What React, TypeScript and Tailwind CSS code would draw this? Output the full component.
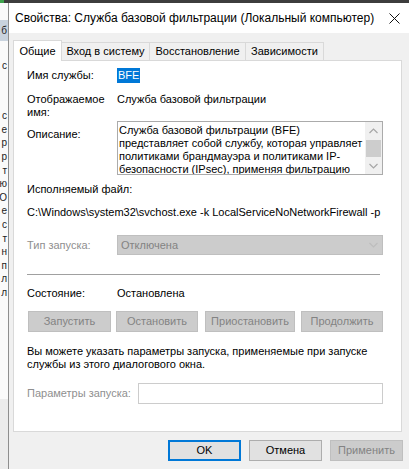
import React from 'react';

const font = "font-['Segoe_UI','Liberation_Sans',Arial,sans-serif]";

const stripLines = ['с', 'е', 'р', 'р', 'т', 'ю', 'О', 'е', 'с', 'т', 'н', 'п', 'л', 'л'];

const Chevron: React.FC<{ up?: boolean; color?: string }> = ({ up, color = '#a6a6a6' }) => (
  <svg width="9" height="6" viewBox="0 0 9 6" className="block">
    <polyline
      points={up ? '0.5,5 4.5,1 8.5,5' : '0.5,1 4.5,5 8.5,1'}
      fill="none"
      stroke={color}
      strokeWidth="1.2"
    />
  </svg>
);

const DisabledButton: React.FC<{ label: string; className?: string }> = ({ label, className }) => (
  <div
    className={`h-[21px] flex items-center justify-center bg-[#cccccc] border border-[#bfbfbf] text-[#838383] ${className}`}
  >
    {label}
  </div>
);

const App: React.FC = () => {
  return (
    <div className={`w-[409px] h-[469px] overflow-hidden flex flex-col bg-[#f0f0f0] text-[11px] leading-[13px] text-black ${font}`}>
      {/* edge of the window behind */}
      <div className="h-[3px] shrink-0 flex bg-[#3d3d3d]">
        <div className="w-[4px] bg-[#3fa34d]" />
      </div>

      <div className="flex flex-1 min-h-0">
        {/* strip of the background window */}
        <div className="w-[9px] shrink-0 flex flex-col border-r border-[#8e8e8e] bg-[#fafafa] overflow-hidden text-[10px]">
          <div className="h-[17px] shrink-0" />
          <div className="h-[21px] shrink-0 bg-[#c9d3de] flex items-center justify-end pr-px text-[#222]">б</div>
          <div className="h-[17px] shrink-0" />
          <div className="h-[14px] shrink-0 flex items-center justify-end pr-px text-[#222]">с</div>
          <div className="h-[37px] shrink-0" />
          {stripLines.map((t, i) => (
            <div key={i} className="h-[13.6px] shrink-0 flex items-center justify-end pr-px text-[#222]">
              {t}
            </div>
          ))}
          <div className="h-[100px] shrink-0" />
          <div className="flex-1 bg-[#ececec]" />
        </div>

        {/* dialog */}
        <div className="flex-1 flex flex-col min-w-0">
          {/* title bar */}
          <div className="h-[30px] shrink-0 bg-white flex items-center pl-[6px] pr-[9px]">
            <span className="text-[12px] leading-[15px] text-black whitespace-nowrap">
              Свойства: Служба базовой фильтрации (Локальный компьютер)
            </span>
            <div className="flex-1" />
            <svg width="11" height="11" viewBox="0 0 11 11">
              <path d="M0.5 0.5 L10.5 10.5 M10.5 0.5 L0.5 10.5" stroke="#111" strokeWidth="1" fill="none" />
            </svg>
          </div>

          {/* tabs */}
          <div className="mt-[7px] ml-[4px] h-[20px] flex items-end relative z-10">
            <div className="w-[49px] h-[21px] -mb-px bg-white border border-b-0 border-[#d9d9d9] flex items-center justify-center">
              Общие
            </div>
            <div className="w-[88px] h-[18px] border border-l-0 border-b-0 border-[#d9d9d9] flex items-center justify-center">
              Вход в систему
            </div>
            <div className="w-[96px] h-[18px] border border-l-0 border-b-0 border-[#d9d9d9] flex items-center justify-center">
              Восстановление
            </div>
            <div className="w-[78px] h-[18px] border border-l-0 border-b-0 border-[#d9d9d9] flex items-center justify-center">
              Зависимости
            </div>
          </div>

          {/* page */}
          <div className="ml-[4px] w-[389px] h-[372px] shrink-0 bg-white border border-[#d9d9d9] pl-[13px] pr-[18px] flex flex-col">
            <div className="mt-[7px] flex items-center h-[15px]">
              <div className="w-[90px]">Имя службы:</div>
              <span className="bg-[#0078d7] text-white leading-[15px] px-px">BFE</span>
            </div>

            <div className="mt-[10px] flex">
              <div className="w-[90px]">
                Отображаемое
                <br />
                имя:
              </div>
              <div>Служба базовой фильтрации</div>
            </div>

            <div className="mt-[2px] flex">
              <div className="w-[90px] pt-[7px]">Описание:</div>
              <div className="flex-1 h-[54px] border border-[#ababab] flex overflow-hidden">
                <div className="flex-1 pl-[1px] pt-[2px] overflow-hidden whitespace-nowrap">
                  Служба базовой фильтрации (BFE)
                  <br />
                  представляет собой службу, которая управляет
                  <br />
                  политиками брандмауэра и политиками IP-
                  <br />
                  безопасности (IPsec), применяя фильтрацию
                </div>
                <div className="w-[17px] bg-[#f0f0f0] flex flex-col">
                  <div className="h-[18px] flex items-center justify-center">
                    <Chevron up />
                  </div>
                  <div className="h-[17px] mx-[1px] bg-[#cdcdcd]" />
                  <div className="flex-1 flex items-center justify-center">
                    <Chevron />
                  </div>
                </div>
              </div>
            </div>

            <div className="mt-[8px]">Исполняемый файл:</div>
            <div className="mt-[10px] whitespace-nowrap">
              C:\Windows\system32\svchost.exe -k LocalServiceNoNetworkFirewall -p
            </div>

            <div className="mt-[16px] flex items-center h-[20px]">
              <div className="w-[90px] text-[#8f8f8f]">Тип запуска:</div>
              <div className="flex-1 h-[20px] bg-[#cccccc] border border-[#bfbfbf] flex items-center pl-[3px] pr-[4px] text-[#838383]">
                <span className="flex-1">Отключена</span>
                <Chevron color="#bdbdbd" />
              </div>
            </div>

            <div className="mt-[19px] h-px w-[353px] bg-[#a0a0a0]" />

            <div className="mt-[12px] flex">
              <div className="w-[90px]">Состояние:</div>
              <div>Остановлена</div>
            </div>

            <div className="mt-[11px] flex">
              <DisabledButton label="Запустить" className="w-[83px] ml-px" />
              <DisabledButton label="Остановить" className="w-[82px] ml-[5px]" />
              <DisabledButton label="Приостановить" className="w-[90px] ml-[7px]" />
              <DisabledButton label="Продолжить" className="w-[82px] ml-[6px]" />
            </div>

            <div className="mt-[13px] whitespace-nowrap">
              Вы можете указать параметры запуска, применяемые при запуске
              <br />
              службы из этого диалогового окна.
            </div>

            <div className="mt-[12px] flex items-center h-[21px]">
              <div className="w-[111px] text-[#8f8f8f] whitespace-nowrap">Параметры запуска:</div>
              <div className="flex-1 h-[21px] bg-white border border-[#cccccc]" />
            </div>
          </div>

          {/* dialog buttons */}
          <div className="mt-[8px] flex justify-end pr-[6px]">
            <div className="w-[73px] h-[21px] flex items-center justify-center bg-[#e1e1e1] border-2 border-[#0078d7]">
              OK
            </div>
            <div className="ml-[8px] w-[73px] h-[21px] flex items-center justify-center bg-[#e1e1e1] border border-[#adadad]">
              Отмена
            </div>
            <DisabledButton label="Применить" className="ml-[8px] w-[73px]" />
          </div>
        </div>
      </div>
    </div>
  );
};

export default App;
